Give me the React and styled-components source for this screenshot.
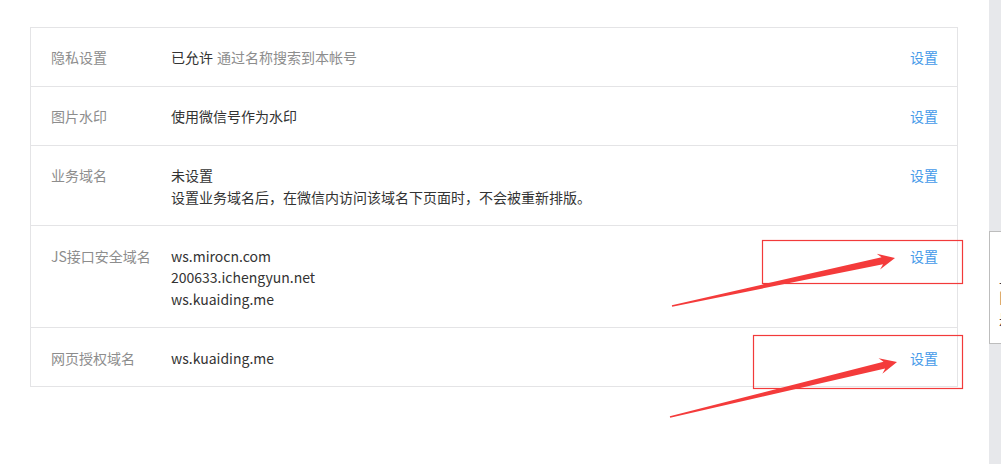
import React from "react";
import styled, { createGlobalStyle } from "styled-components";

const Global = createGlobalStyle`
  html, body { margin: 0; padding: 0; background: #fff; }
  body {
    font-family: "Noto Sans CJK SC", "Microsoft YaHei", "Noto Sans", sans-serif;
    font-size: 14px;
    -webkit-font-smoothing: antialiased;
  }
`;

const Page = styled.div`
  position: relative;
  display: flex;
  width: 1001px;
  height: 464px;
  overflow: hidden;
`;

const Main = styled.div`
  flex: 1;
  padding: 27px 31px 0 30px;
  background: #fff;
`;

const SideStrip = styled.div`
  width: 12px;
  background: #e7e8eb;
`;

const Table = styled.div`
  border: 1px solid #e4e4e6;
`;

const Row = styled.div`
  display: flex;
  align-items: flex-start;
  padding: 19.1px 19px 17.4px 20px;
  line-height: 21.5px;
  & + & { border-top: 1px solid #e4e4e6; }
`;

const Label = styled.div`
  width: 120px;
  flex: none;
  color: #8d8d8d;
`;

const Value = styled.div`
  flex: 1;
  color: #333;
`;

const Line = styled.div``;

const Muted = styled.span`
  color: #8d8d8d;
  margin-left: 4px;
`;

const Link = styled.a`
  color: #459ae9;
  text-decoration: none;
  cursor: pointer;
`;

const Popup = styled.div`
  position: absolute;
  left: 989px;
  top: 231px;
  width: 200px;
  height: 113px;
  box-sizing: border-box;
  background: #fff;
  border: 1px solid #bdbdbd;
  padding: 14px 0 0 9px;
  color: #353535;
  line-height: 20.5px;
`;

const Overlay = styled.svg`
  position: absolute;
  left: 0;
  top: 0;
  pointer-events: none;
`;

function arrowPoints(tail, tip) {
  const dx = tip[0] - tail[0];
  const dy = tip[1] - tail[1];
  const len = Math.hypot(dx, dy);
  const ux = dx / len, uy = dy / len;
  const nx = -uy, ny = ux;
  const headLen = 17, headHalf = 8, neck = 13, shaftHalf = 3.5, tailHalf = 0.8;
  const bx = tip[0] - headLen * ux, by = tip[1] - headLen * uy;
  const sx = tip[0] - neck * ux, sy = tip[1] - neck * uy;
  const pts = [
    [tail[0] + tailHalf * nx, tail[1] + tailHalf * ny],
    [sx + shaftHalf * nx, sy + shaftHalf * ny],
    [bx + headHalf * nx, by + headHalf * ny],
    tip,
    [bx - headHalf * nx, by - headHalf * ny],
    [sx - shaftHalf * nx, sy - shaftHalf * ny],
    [tail[0] - tailHalf * nx, tail[1] - tailHalf * ny],
  ];
  return pts.map((p) => p.join(",")).join(" ");
}

const rows = [
  { label: "隐私设置", lines: [<>已允许<Muted>通过名称搜索到本帐号</Muted></>] },
  { label: "图片水印", lines: ["使用微信号作为水印"] },
  { label: "业务域名", lines: ["未设置", "设置业务域名后，在微信内访问该域名下页面时，不会被重新排版。"] },
  { label: "JS接口安全域名", lines: ["ws.mirocn.com", "200633.ichengyun.net", "ws.kuaiding.me"] },
  { label: "网页授权域名", lines: ["ws.kuaiding.me"] },
];

export default function App() {
  return (
    <>
      <Global />
      <Page>
        <Main>
          <Table>
            {rows.map((r) => (
              <Row key={r.label}>
                <Label>{r.label}</Label>
                <Value>
                  {r.lines.map((l, i) => (
                    <Line key={i}>{l}</Line>
                  ))}
                </Value>
                <Link>设置</Link>
              </Row>
            ))}
          </Table>
        </Main>
        <SideStrip />
        <Popup>
          <Line>·</Line>
          <Line>上</Line>
          <Line>旧</Line>
          <Line>是</Line>
        </Popup>
        <Overlay width="1001" height="464" viewBox="0 0 1001 464">
          <rect x="762.5" y="240.5" width="200" height="43" fill="none" stroke="#f23a3a" strokeWidth="1.2" />
          <rect x="753.5" y="335.5" width="209" height="53" fill="none" stroke="#f23a3a" strokeWidth="1.2" />
          <polygon points={arrowPoints([672, 306], [895, 258])} fill="#f43b3b" />
          <polygon points={arrowPoints([670, 417], [897, 362])} fill="#f43b3b" />
        </Overlay>
      </Page>
    </>
  );
}
